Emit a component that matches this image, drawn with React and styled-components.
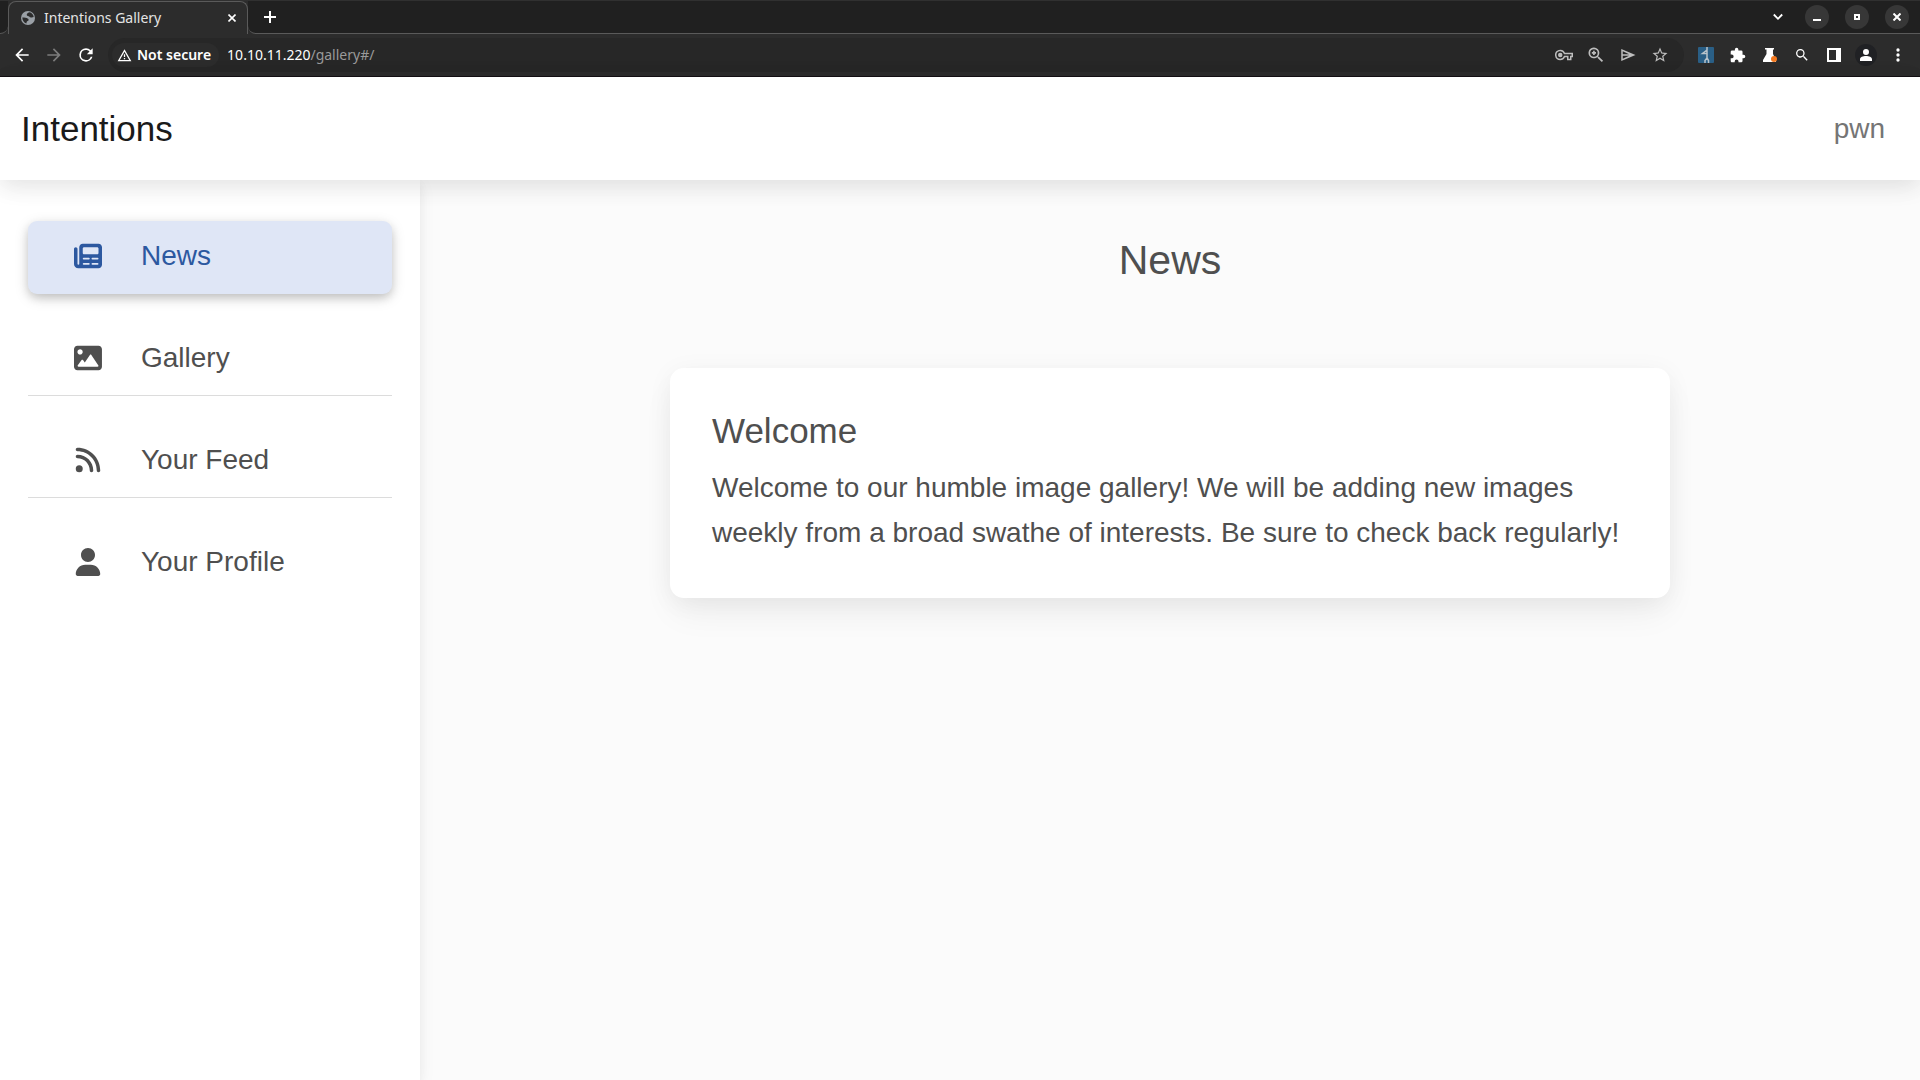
import React from "react";
import styled, { createGlobalStyle, css } from "styled-components";

const GlobalStyle = createGlobalStyle`
  *, *::before, *::after { box-sizing: border-box; }
  html, body, #root { height: 100%; }
  body {
    margin: 0;
    background: #fbfbfb;
    color: #4f4f4f;
    font: 28px/45px "Liberation Sans", Arial, sans-serif;
  }
  h1, h2, p, ul { margin: 0; padding: 0; font-weight: 400; }
  svg { display: block; flex: none; }
`;

const Window = styled.div`
  display: flex;
  flex-direction: column;
  min-height: 100%;
`;

/* ---------- browser chrome ---------- */

const Chrome = styled.div`
  font: 14px/20px "Noto Sans", "Open Sans", sans-serif;
  color: #fff;
  background: #2c2c2c;
  border-bottom: 1px solid #141014;
`;

const TabStrip = styled.div`
  display: flex;
  align-items: stretch;
  height: 34px;
  background: #202020;
  border-top: 1px solid #303030;
`;

const StripEdge = styled.div`
  flex: none;
  width: 8px;
  border-bottom: 1px solid #5a5a5a;
  border-bottom-right-radius: 8px;
  background: #202020;
`;

const StripActions = styled.div`
  display: flex;
  flex: 1;
  align-items: center;
  padding: 0 11px 0 8px;
  border-bottom: 1px solid #5a5a5a;
  border-bottom-left-radius: 8px;
  background: #202020;
`;

const TabBack = styled.div`
  display: flex;
  background: #2c2c2c;
  flex: 1;
`;

const Tab = styled.div`
  display: flex;
  align-items: center;
  width: 240px;
  padding: 0 7px 0 11px;
  background: #2c2c2c;
  border: 1px solid #5a5a5a;
  border-bottom: 0;
  border-radius: 8px 8px 0 0;
`;

const TabTitle = styled.span`
  flex: 1;
  margin-left: 8px;
  color: #e4e4e4;
  white-space: nowrap;
`;

const IconButton = styled.button`
  display: flex;
  align-items: center;
  justify-content: center;
  flex: none;
  width: ${(p) => p.$size || 32}px;
  height: ${(p) => p.$size || 32}px;
  padding: 0;
  border: 0;
  border-radius: 50%;
  background: ${(p) => p.$bg || "transparent"};
  color: ${(p) => p.$color || "#fff"};
`;

const Spacer = styled.div`
  flex: 1;
`;

const WindowButtons = styled.div`
  display: flex;
  gap: 16px;
  margin-left: 13px;
`;

const Toolbar = styled.div`
  display: flex;
  align-items: center;
  height: 42px;
  padding: 0 6px;
`;

const AddressBar = styled.div`
  display: flex;
  flex: 1;
  align-items: center;
  height: 34px;
  margin: 0 6px;
  padding: 0 8px 0 4px;
  border-radius: 17px;
  background: #272727;
`;

const SecurityChip = styled.button`
  display: flex;
  align-items: center;
  gap: 5px;
  height: 24px;
  padding: 0 8px 0 5px;
  border: 0;
  border-radius: 12px;
  background: #2c2c2c;
  color: #fff;
  font: 600 14px/20px "Noto Sans", "Open Sans", sans-serif;
  white-space: nowrap;
`;

const Url = styled.span`
  flex: 1;
  margin-left: 8px;
  color: #9a9a9a;
  white-space: nowrap;

  b { font-weight: 400; color: #fff; }
`;

/* ---------- page ---------- */

const Header = styled.header`
  position: relative;
  z-index: 1;
  display: flex;
  align-items: center;
  justify-content: space-between;
  padding: 29px 35px 29px 21px;
  background: #fff;
  box-shadow: 0 7px 21px rgba(0, 0, 0, 0.09), 0 4px 35px rgba(0, 0, 0, 0.03);
`;

const Brand = styled.a`
  color: #1a1a1a;
  font-size: 35px;
  text-decoration: none;
`;

const UserLink = styled.a`
  color: #757575;
  text-decoration: none;
`;

const Body = styled.div`
  display: flex;
  flex: 1;
`;

const Sidebar = styled.nav`
  flex: none;
  width: 420px;
  padding: 41px 28px;
  background: #fff;
  box-shadow: 0 4px 9px rgba(0, 0, 0, 0.05), 0 4px 18px rgba(0, 0, 0, 0.05);
`;

const Menu = styled.ul`
  display: flex;
  flex-direction: column;
  gap: 29px;
  list-style: none;
`;

const MenuLink = styled.a`
  display: flex;
  align-items: center;
  gap: 38px;
  height: 73px;
  padding: 0 45px 3px;
  border-bottom: 1px solid ${(p) => (p.$divided ? "#dcdcdc" : "transparent")};
  color: #4f4f4f;
  text-decoration: none;

  ${(p) =>
    p.$active &&
    css`
      border-radius: 9px;
      background: #dfe6f6;
      color: #2c58a0;
      box-shadow: 0 4px 16px -2px rgba(0, 0, 0, 0.2), 0 4px 9px rgba(0, 0, 0, 0.12);
    `}
`;

const Main = styled.main`
  flex: 1;
  display: flex;
  flex-direction: column;
  align-items: center;
  padding-top: 55px;
`;

const PageTitle = styled.h1`
  font-size: 41px;
  line-height: 50px;
`;

const Card = styled.article`
  width: 66.6667%;
  margin-top: 83px;
  padding: 42px 42px 43px;
  border-radius: 14px;
  background: #fff;
  box-shadow: 0 4px 26px rgba(0, 0, 0, 0.05), 0 18px 35px -4px rgba(0, 0, 0, 0.06);
`;

const CardTitle = styled.h2`
  margin-bottom: 13px;
  font-size: 35px;
  line-height: 42px;
`;

/* ---------- icons ---------- */

const Icon = ({ size = 20, box = "0 0 24 24", d, children, ...rest }) => (
  <svg width={size} height={size} viewBox={box} fill="currentColor" aria-hidden="true" {...rest}>
    {d && <path d={d} />}
    {children}
  </svg>
);

const MenuIcon = ({ w = 512, d }) => (
  <svg width="30" height="28" viewBox={`${(w - 548) / 2} 0 548 512`} fill="currentColor" aria-hidden="true">
    <path d={d} />
  </svg>
);

const icons = {
  back: "M20 11H7.8l5.6-5.6L12 4l-8 8 8 8 1.4-1.4L7.8 13H20z",
  forward: "M12 4l-1.4 1.4 5.6 5.6H4v2h12.2l-5.6 5.6L12 20l8-8z",
  reload:
    "M17.65 6.35A7.96 7.96 0 0 0 12 4a8 8 0 1 0 7.73 10h-2.08A6 6 0 1 1 12 6c1.66 0 3.14.69 4.22 1.78L13 11h7V4z",
  warning: "M1 21h22L12 2zm3.5-2L12 6l7.5 13zM11 16h2v2h-2zm0-6h2v4.5h-2z",
  key: "M22 19h-6v-4h-2.68A6.99 6.99 0 0 1 7 19a7 7 0 1 1 6.32-10H24v6h-2zm-4-2h2v-4h2v-2H11.94l-.23-.67A5 5 0 1 0 7 17a5 5 0 0 0 4.71-3.33l.23-.67H18zM7 15a3 3 0 1 1 0-6 3 3 0 0 1 0 6z",
  zoomIn:
    "M15.5 14h-.79l-.28-.27A6.5 6.5 0 1 0 13.73 14.43l.27.28v.79l5 4.99L20.49 19zm-6 0a4.5 4.5 0 1 1 0-9 4.5 4.5 0 0 1 0 9zM8.5 7h2v1.5H12v2h-1.5V12h-2v-1.5H7v-2h1.5z",
  send: "M3 4v16l19-8zm2 3l8.5 4H5zm0 10v-4h8.5z",
  star: "M22 9.24l-7.19-.62L12 2 9.19 8.63 2 9.24l5.46 4.73L5.82 21 12 17.27 18.18 21l-1.63-7.03zM12 15.4l-3.76 2.27 1-4.28-3.32-2.88 4.38-.38L12 6.1l1.71 4.04 4.38.38-3.32 2.88 1 4.28z",
  puzzle:
    "M20.5 11H19V7a2 2 0 0 0-2-2h-4V3.5a2.5 2.5 0 0 0-5 0V5H4a2 2 0 0 0-2 2v3.8h1.5a2.7 2.7 0 0 1 0 5.4H2V20c0 1.1.9 2 2 2h3.8v-1.5a2.7 2.7 0 0 1 5.4 0V22H17a2 2 0 0 0 2-2v-4h1.5a2.5 2.5 0 0 0 0-5z",
  search:
    "M15.5 14h-.79l-.28-.27A6.5 6.5 0 1 0 13.73 14.43l.27.28v.79l5 4.99L20.49 19zm-6 0a4.5 4.5 0 1 1 0-9 4.5 4.5 0 0 1 0 9z",
  more: "M12 8a2 2 0 1 0 0-4 2 2 0 0 0 0 4zm0 2a2 2 0 1 0 0 4 2 2 0 0 0 0-4zm0 6a2 2 0 1 0 0 4 2 2 0 0 0 0-4z",
};

const menu = [
  {
    label: "News",
    href: "#/",
    active: true,
    d: "M96 96c0-35.3 28.7-64 64-64H448c35.3 0 64 28.7 64 64V416c0 35.3-28.7 64-64 64H80c-44.2 0-80-35.8-80-80V128c0-17.7 14.3-32 32-32s32 14.3 32 32V400c0 8.8 7.2 16 16 16s16-7.2 16-16V96zm64 24v80c0 13.3 10.7 24 24 24H424c13.3 0 24-10.7 24-24V120c0-13.3-10.7-24-24-24H184c-13.3 0-24 10.7-24 24zm0 184c0 8.8 7.2 16 16 16h96c8.8 0 16-7.2 16-16s-7.2-16-16-16H176c-8.8 0-16 7.2-16 16zm160 0c0 8.8 7.2 16 16 16h96c8.8 0 16-7.2 16-16s-7.2-16-16-16H336c-8.8 0-16 7.2-16 16zM160 400c0 8.8 7.2 16 16 16h96c8.8 0 16-7.2 16-16s-7.2-16-16-16H176c-8.8 0-16 7.2-16 16zm160 0c0 8.8 7.2 16 16 16h96c8.8 0 16-7.2 16-16s-7.2-16-16-16H336c-8.8 0-16 7.2-16 16z",
  },
  {
    label: "Gallery",
    href: "#/gallery",
    divided: true,
    d: "M447.1 32h-384C28.64 32-.0091 60.65-.0091 96v320c0 35.35 28.65 64 63.1 64h384c35.35 0 64-28.65 64-64V96C511.1 60.65 483.3 32 447.1 32zM111.1 96c26.51 0 48 21.49 48 48S138.5 192 111.1 192s-48-21.49-48-48S85.48 96 111.1 96zM446.1 407.6C443.3 412.8 437.9 416 432 416H82.01c-6.021 0-11.53-3.379-14.26-8.75c-2.73-5.367-2.215-11.81 1.334-16.68l70-96C142.1 290.4 146.9 288 152 288s9.916 2.441 12.93 6.574l32.46 44.51l93.3-139.1C293.7 194.7 298.7 192 304 192s10.35 2.672 13.31 7.125l128 192C448.6 396 448.9 402.3 446.1 407.6z",
  },
  {
    label: "Your Feed",
    href: "#/feed",
    divided: true,
    w: 448,
    d: "M0 64C0 46.3 14.3 32 32 32c229.8 0 416 186.2 416 416c0 17.7-14.3 32-32 32s-32-14.3-32-32C384 253.6 226.4 96 32 96C14.3 96 0 81.7 0 64zM0 416a64 64 0 1 1 128 0A64 64 0 1 1 0 416zM32 160c159.1 0 288 128.9 288 288c0 17.7-14.3 32-32 32s-32-14.3-32-32c0-123.7-100.3-224-224-224c-17.7 0-32-14.3-32-32s14.3-32 32-32z",
  },
  {
    label: "Your Profile",
    href: "#/profile",
    w: 448,
    d: "M224 256c70.7 0 128-57.31 128-128s-57.3-128-128-128C153.3 0 96 57.31 96 128S153.3 256 224 256zM274.7 304H173.3C77.61 304 0 381.6 0 477.3c0 19.14 15.52 34.67 34.66 34.67h378.7C432.5 512 448 496.5 448 477.3C448 381.6 370.4 304 274.7 304z",
  },
];

export default function App() {
  return (
    <Window>
      <GlobalStyle />
      <Chrome>
        <TabStrip>
          <TabBack>
            <StripEdge />
            <Tab>
              <Icon size={16} box="0 0 16 16">
                <circle cx="8" cy="8" r="7" fill="#9aa0a6" />
                <path
                  d="M9.500 2.300C7.500 3 6.500 4 6.800 5.200c.4 1 1.800.6 2.400 1.400.5.8 1.700 1.200 2.600.8L13.700 7c-.2-2.300-2-4.200-4.200-4.700zM2.300 7.600c1.500-.3 3.500-.2 4.500.5 1 .6 2 1 1.800 2-.2 1.100-1.800 1-2 2.200l-.2 1.300C4 13 2.300 10.500 2.300 7.600z"
                  fill="#2c2c2c"
                />
              </Icon>
              <TabTitle>Intentions Gallery</TabTitle>
              <IconButton $size={16} aria-label="Close tab">
                <Icon size={8} box="0 0 8 8">
                  <path d="M.5.5l7 7M7.5.5l-7 7" stroke="currentColor" strokeWidth="1.6" />
                </Icon>
              </IconButton>
            </Tab>
            <StripActions>
              <IconButton $size={28} aria-label="New tab">
                <Icon size={12} box="0 0 12 12" d="M5 0h2v5h5v2H7v5H5V7H0V5h5z" />
              </IconButton>
              <Spacer />
              <IconButton $size={28} aria-label="Search tabs">
                <Icon size={10} box="0 0 10 10">
                  <path d="M.8 2.5L5 6.800l4.200-4.300" fill="none" stroke="currentColor" strokeWidth="1.8" />
                </Icon>
              </IconButton>
              <WindowButtons>
                <IconButton $size={24} $bg="#373737" aria-label="Minimize">
                  <Icon size={8} box="0 0 8 8" d="M0 6h8v2H0z" />
                </IconButton>
                <IconButton $size={24} $bg="#373737" aria-label="Maximize">
                  <Icon size={6} box="0 0 6 6">
                    <path fillRule="evenodd" d="M0 0h6v6H0zM2 2v2h2V2z" />
                  </Icon>
                </IconButton>
                <IconButton $size={24} $bg="#373737" aria-label="Close window">
                  <Icon size={8} box="0 0 8 8">
                    <path d="M.5.5l7 7M7.5.5l-7 7" stroke="currentColor" strokeWidth="2" />
                  </Icon>
                </IconButton>
              </WindowButtons>
            </StripActions>
          </TabBack>
        </TabStrip>
        <Toolbar>
          <IconButton aria-label="Back"><Icon d={icons.back} /></IconButton>
          <IconButton $color="#7c7c7c" aria-label="Forward"><Icon d={icons.forward} /></IconButton>
          <IconButton aria-label="Reload"><Icon d={icons.reload} /></IconButton>
          <AddressBar>
            <SecurityChip>
              <Icon size={15} d={icons.warning} />
              Not secure
            </SecurityChip>
            <Url><b>10.10.11.220</b>/gallery#/</Url>
            <IconButton $color="#bdbdbd" aria-label="Passwords"><Icon size={18} d={icons.key} /></IconButton>
            <IconButton $color="#bdbdbd" aria-label="Zoom"><Icon d={icons.zoomIn} /></IconButton>
            <IconButton $color="#bdbdbd" aria-label="Share"><Icon size={18} d={icons.send} /></IconButton>
            <IconButton $color="#bdbdbd" aria-label="Bookmark"><Icon size={18} d={icons.star} /></IconButton>
          </AddressBar>
          <IconButton aria-label="Penetration testing extension">
            <Icon size={16} box="0 0 16 16">
              <rect width="16" height="16" rx="1" fill="#2a5f86" />
              <path
                d="M9 0v3L4.500 6.500H9M9 3v8M9 11l-2 2.500V16M9 11l1.500 2.500V16"
                fill="none"
                stroke="#b9c3ca"
                strokeWidth="1.500"
              />
            </Icon>
          </IconButton>
          <IconButton aria-label="Extensions"><Icon size={16} box="1 0 23 23" d={icons.puzzle} /></IconButton>
          <IconButton aria-label="Lab">
            <Icon size={16} box="0 0 16 16">
              <path d="M3 1h9v1.500h-1V7l3 6v2H1v-2l3.500-6V2.500H3z" />
              <circle cx="12" cy="12" r="3" fill="#f5791f" />
            </Icon>
          </IconButton>
          <IconButton aria-label="Search"><Icon size={16} d={icons.search} /></IconButton>
          <IconButton aria-label="Side panel">
            <Icon size={14} box="0 0 14 14"><path fillRule="evenodd" d="M0 0h14v14H0zM2 2v10h7V2z" /></Icon>
          </IconButton>
          <IconButton aria-label="Profile">
            <Icon size={22} box="0 0 22 22">
              <circle cx="11" cy="11" r="11" fill="#202124" />
              <path d="M11 11a3 3 0 1 0 0-6 3 3 0 0 0 0 6zm0 1c-3 0-6 1.200-6 3.200V17h12v-1.800c0-2-3-3.200-6-3.200z" />
            </Icon>
          </IconButton>
          <IconButton aria-label="Menu"><Icon size={20} d={icons.more} /></IconButton>
        </Toolbar>
      </Chrome>

      <Header>
        <Brand href="#/">Intentions</Brand>
        <UserLink href="#/profile">pwn</UserLink>
      </Header>

      <Body>
        <Sidebar>
          <Menu>
            {menu.map((item) => (
              <li key={item.label}>
                <MenuLink href={item.href} $active={item.active} $divided={item.divided}>
                  <MenuIcon w={item.w} d={item.d} />
                  {item.label}
                </MenuLink>
              </li>
            ))}
          </Menu>
        </Sidebar>
        <Main>
          <PageTitle>News</PageTitle>
          <Card>
            <CardTitle>Welcome</CardTitle>
            <p>
              Welcome to our humble image gallery! We will be adding new images weekly from a broad
              swathe of interests. Be sure to check back regularly!
            </p>
          </Card>
        </Main>
      </Body>
    </Window>
  );
}
